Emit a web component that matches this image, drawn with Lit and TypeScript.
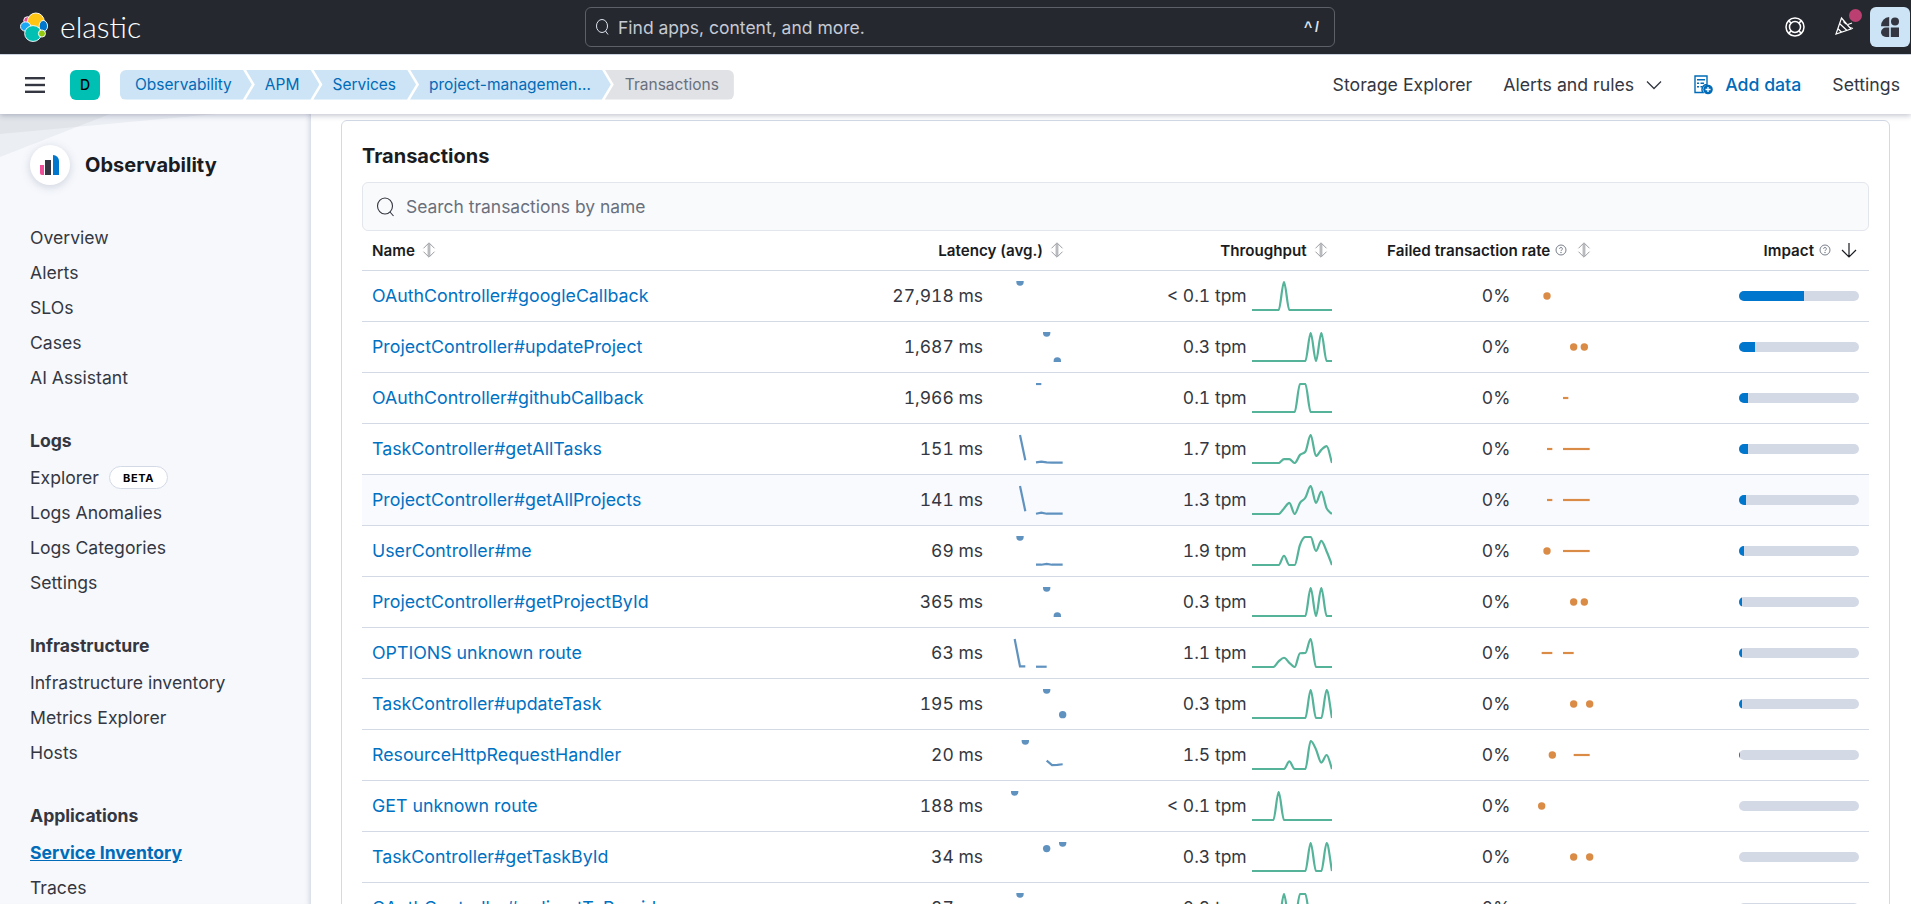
import { LitElement, css, html, svg } from 'lit'
import { customElement } from 'lit/decorators.js'

const STEP = 16 / 3
const SPARK_H = 30

type Series = Array<number | null>

interface Row {
  name: string
  latency: string
  throughput: string
  lat: Series
  tpm: number[]
  impact: number
}

// sparse series helper: idx -> value, everything else null
const sparse = (m: Record<number, number>): Series =>
  Array.from({ length: 16 }, (_, i) => (i in m ? m[i] : null))

const line = (m: Record<number, number>) => {
  const out: number[] = new Array(16).fill(0)
  Object.entries(m).forEach(([k, v]) => (out[+k] = v))
  return out
}

const ROWS: Row[] = [
  { name: 'OAuthController#googleCallback', latency: '27,918 ms', throughput: '< 0.1 tpm', lat: sparse({ 6: 1 }), tpm: line({ 6: 1 }), impact: 65 },
  { name: 'ProjectController#updateProject', latency: '1,687 ms', throughput: '0.3 tpm', lat: sparse({ 11: 1, 13: 0 }), tpm: line({ 11: 1, 13: 1 }), impact: 16 },
  { name: 'OAuthController#githubCallback', latency: '1,966 ms', throughput: '0.1 tpm', lat: sparse({ 9: 1, 10: 1 }), tpm: line({ 9: 1, 10: 1 }), impact: 9 },
  { name: 'TaskController#getAllTasks', latency: '151 ms', throughput: '1.7 tpm', lat: sparse({ 6: 1, 7: 0.1, 9: 0.02, 10: 0.05, 11: 0.02, 12: 0.01, 13: 0.01, 14: 0.01 }), tpm: line({ 6: 0.14, 7: 0.14, 9: 0.29, 10: 0.4, 11: 1, 12: 0.25, 13: 0.47, 14: 0.6 }), impact: 9 },
  { name: 'ProjectController#getAllProjects', latency: '141 ms', throughput: '1.3 tpm', lat: sparse({ 6: 1, 7: 0.1, 9: 0.01, 10: 0.05, 11: 0.01, 12: 0.01, 13: 0.01, 14: 0.01 }), tpm: line({ 6: 0.2, 7: 0.4, 9: 0.4, 10: 0.58, 11: 1, 12: 0.4, 13: 0.8, 14: 0.2 }), impact: 7 },
  { name: 'UserController#me', latency: '69 ms', throughput: '1.9 tpm', lat: sparse({ 6: 1, 9: 0.01, 10: 0.01, 11: 0.04, 12: 0.01, 13: 0.01, 14: 0.01 }), tpm: line({ 6: 0.33, 9: 0.72, 10: 1, 11: 1, 12: 0.5, 13: 0.86, 14: 0.48 }), impact: 5 },
  { name: 'ProjectController#getProjectById', latency: '365 ms', throughput: '0.3 tpm', lat: sparse({ 11: 1, 13: 0 }), tpm: line({ 11: 1, 13: 1 }), impact: 3.3 },
  { name: 'OPTIONS unknown route', latency: '63 ms', throughput: '1.1 tpm', lat: sparse({ 5: 1, 6: 0.02, 7: 0.02, 9: 0.01, 10: 0.01, 11: 0.01 }), tpm: line({ 5: 0.2, 6: 0.33, 7: 0.15, 9: 0.49, 10: 0.5, 11: 1 }), impact: 2.5 },
  { name: 'TaskController#updateTask', latency: '195 ms', throughput: '0.3 tpm', lat: sparse({ 11: 1, 14: 0.12 }), tpm: line({ 11: 1, 14: 1 }), impact: 2.5 },
  { name: 'ResourceHttpRequestHandler', latency: '20 ms', throughput: '1.5 tpm', lat: sparse({ 7: 1, 11: 0.3, 12: 0.14, 13: 0.15, 14: 0.17 }), tpm: line({ 7: 0.27, 11: 1, 12: 0.7, 13: 0.23, 14: 0.5 }), impact: 1.2 },
  { name: 'GET unknown route', latency: '188 ms', throughput: '< 0.1 tpm', lat: sparse({ 5: 1 }), tpm: line({ 5: 1 }), impact: 0 },
  { name: 'TaskController#getTaskById', latency: '34 ms', throughput: '0.3 tpm', lat: sparse({ 11: 0.8, 14: 1 }), tpm: line({ 11: 1, 14: 1 }), impact: 0 },
  { name: 'OAuthController#redirectToProvider', latency: '27 ms', throughput: '0.2 tpm', lat: sparse({ 6: 1 }), tpm: line({ 6: 1, 9: 1, 10: 1 }), impact: 0 }
]

const SIDE_GROUPS = [
  { title: '', items: ['Overview', 'Alerts', 'SLOs', 'Cases', 'AI Assistant'] },
  { title: 'Logs', items: ['Explorer', 'Logs Anomalies', 'Logs Categories', 'Settings'] },
  { title: 'Infrastructure', items: ['Infrastructure inventory', 'Metrics Explorer', 'Hosts'] },
  { title: 'Applications', items: ['Service Inventory', 'Traces'] }
]

const CRUMBS = ['Observability', 'APM', 'Services', 'project-managemen…']

const px = (i: number) => i * STEP
const py = (v: number) => 29 - v * 28

// same shape as d3 curveMonotoneX
function monotonePath(vals: number[]): string {
  const xs = vals.map((_, i) => px(i))
  const ys = vals.map(py)
  const n = vals.length
  const d: number[] = []
  for (let i = 0; i < n - 1; i++) d.push((ys[i + 1] - ys[i]) / STEP)
  const t: number[] = new Array(n).fill(0)
  for (let i = 1; i < n - 1; i++) {
    const a = d[i - 1]
    const b = d[i]
    t[i] = a * b <= 0 ? 0 : (Math.sign(a) + Math.sign(b)) * Math.min(Math.abs(a), Math.abs(b), Math.abs(a + b) / 4)
  }
  t[0] = d[0]
  t[n - 1] = d[n - 2]
  let out = `M${xs[0]},${ys[0]}`
  for (let i = 0; i < n - 1; i++) {
    const h = STEP / 3
    out += `C${xs[i] + h},${ys[i] + t[i] * h} ${xs[i + 1] - h},${ys[i + 1] - t[i + 1] * h} ${xs[i + 1]},${ys[i + 1]}`
  }
  return out
}

function sparkLine(vals: number[], color: string) {
  return html`<svg class="spark" viewBox="0 0 80 ${SPARK_H}">
    <path d=${monotonePath(vals)} fill="none" stroke=${color} stroke-width="2.2" />
  </svg>`
}

// series with holes: single points become dots, runs become line pieces
function sparkGaps(vals: Series, color: string, flat = false) {
  const parts: ReturnType<typeof svg>[] = []
  let run: number[] = []
  const flush = () => {
    if (run.length === 1) {
      const v = vals[run[0]] as number
      parts.push(svg`<circle cx=${px(run[0])} cy=${flat ? 15 : py(v)} r="3.7" fill=${color} />`)
    } else if (run.length > 1) {
      const pts = run.map((i) => `${px(i)},${flat ? 15 : py(vals[i] as number)}`).join(' ')
      parts.push(svg`<polyline points=${pts} fill="none" stroke=${color} stroke-width="2.2" />`)
    }
    run = []
  }
  vals.forEach((v, i) => {
    if (v === null) flush()
    else run.push(i)
  })
  flush()
  return html`<svg class="spark" viewBox="0 0 80 ${SPARK_H}">${parts}</svg>`
}

const sortIcon = html`<svg class="sort" viewBox="0 0 14 16" fill="none" stroke="#8e9298" stroke-width="0.9">
  <path d="M7 .8L1.5 6.3M7 .8l5.5 5.5M7 15.2L1.5 9.7M7 15.2l5.5-5.5M6.2 2v12M7.8 2v12" />
</svg>`

const helpIcon = html`<svg class="help" viewBox="0 0 12 12" fill="none" stroke="#69707d" stroke-width="0.9">
  <circle cx="6" cy="6" r="5" />
  <path d="M4.6 4.8a1.4 1.4 0 1 1 2 1.3c-.4.2-.6.5-.6 1" />
  <circle cx="6" cy="8.6" r=".3" />
</svg>`

@customElement('app-root')
export class AppRoot extends LitElement {
  static styles = css`
    :host {
      display: block;
      height: 904px;
      overflow: hidden;
      font-family: Inter, 'Liberation Sans', sans-serif;
      color: #343741;
      background: #fff;
    }
    .topbar {
      height: 54px;
      background: #25282f;
      border-bottom: 1px solid #d3dae6;
      display: grid;
      grid-template-columns: 585px 750px 1fr;
      align-items: center;
    }
    .brand {
      display: flex;
      align-items: center;
      gap: 12px;
      padding-left: 20px;
    }
    .brand span {
      font-family: Lato, sans-serif;
      font-weight: 300;
      font-size: 30px;
      color: #fff;
      line-height: 40px;
      margin-top: -3px;
    }
    .global-search {
      height: 40px;
      box-sizing: border-box;
      border: 1px solid #5d6068;
      border-radius: 6px;
      display: flex;
      align-items: center;
      padding: 0 12px 0 9px;
      gap: 7px;
      color: #c5cad3;
      font-size: 17.5px;
    }
    .global-search .grow {
      flex: 1;
    }
    .global-search kbd {
      font-family: 'Liberation Sans', sans-serif;
      font-weight: 700;
      font-size: 14px;
      color: #dfe5ef;
      letter-spacing: 3px;
    }
    .top-actions {
      display: flex;
      justify-content: flex-end;
      align-items: center;
      height: 100%;
    }
    .lifebuoy {
      margin-right: 30px;
    }
    .party {
      position: relative;
      display: flex;
      margin-right: 15px;
      margin-bottom: 4px;
    }
    .party i {
      position: absolute;
      left: 13.5px;
      top: -6.5px;
      width: 13px;
      height: 13px;
      border-radius: 50%;
      background: #bc3f72;
    }
    .help-btn {
      width: 40px;
      height: 40px;
      margin-right: 1px;
      background: #cce4f5;
      border-radius: 6px;
      display: flex;
      align-items: center;
      justify-content: center;
    }
    .subbar {
      position: relative;
      z-index: 2;
      height: 59px;
      background: #fff;
      box-shadow: 0 2px 5px rgba(60, 70, 100, 0.28);
      display: flex;
      align-items: center;
    }
    .burger {
      margin-left: 25px;
      display: flex;
    }
    .avatar {
      margin-left: 25px;
      width: 30px;
      height: 30px;
      border-radius: 6px;
      background: #00bfb3;
      color: #000;
      font-size: 14px;
      font-weight: 500;
      display: flex;
      align-items: center;
      justify-content: center;
    }
    .crumbs {
      margin-left: 20px;
      display: flex;
      height: 30px;
    }
    .crumb {
      height: 30px;
      display: flex;
      align-items: center;
      font-size: 15.5px;
      color: #006bb8;
      background: #cce4f5;
      padding: 0 20px 0 19px;
      margin-right: -6px;
      white-space: nowrap;
      clip-path: polygon(0 0, calc(100% - 9px) 0, 100% 50%, calc(100% - 9px) 100%, 0 100%, 9px 50%);
    }
    .crumb.first {
      border-radius: 6px 0 0 6px;
      padding-left: 15px;
      clip-path: polygon(0 0, calc(100% - 9px) 0, 100% 50%, calc(100% - 9px) 100%, 0 100%);
    }
    .crumb.last {
      background: #e0e2e5;
      color: #69707d;
      border-radius: 0 6px 6px 0;
      padding: 0 15px 0 20px;
      margin-right: 0;
      clip-path: polygon(0 0, 100% 0, 100% 100%, 0 100%, 9px 50%);
    }
    .sub-links {
      margin-left: auto;
      display: flex;
      align-items: center;
      font-size: 17.7px;
      color: #343741;
      padding-right: 11px;
    }
    .sub-links .link {
      display: flex;
      align-items: center;
    }
    .sub-links .alerts {
      margin-left: 31px;
      gap: 12px;
    }
    .sub-links .add {
      margin-left: 32px;
      gap: 12px;
      color: #006bb8;
      font-weight: 500;
    }
    .sub-links .settings {
      margin-left: 31px;
    }
    .body {
      display: flex;
      height: 790px;
      overflow: hidden;
    }
    .side {
      position: relative;
      width: 311px;
      flex: none;
      box-sizing: border-box;
      background: #f6f8fc;
      box-shadow: inset -6px 0 6px -6px rgba(90, 100, 130, 0.35);
      padding: 0 0 0 30px;
      color: #343741;
      font-size: 17.6px;
    }
    .side .deco {
      position: absolute;
      left: 0;
      top: 0;
    }
    .side-head {
      position: relative;
      display: flex;
      align-items: center;
      gap: 15px;
      height: 40px;
      padding-top: 31px;
      margin-bottom: 35px;
    }
    .side-logo {
      width: 40px;
      height: 40px;
      border-radius: 50%;
      background: #fff;
      box-shadow: 0 2px 8px rgba(90, 100, 130, 0.25);
      display: flex;
      align-items: center;
      justify-content: center;
    }
    .side-head strong {
      font-size: 20px;
      font-weight: 700;
      color: #1a1c21;
    }
    .group {
      margin-bottom: 31.5px;
    }
    .group h4 {
      margin: 0 0 5.5px;
      font-size: 17.6px;
      font-weight: 700;
      line-height: 28px;
      color: #343741;
    }
    .group a {
      display: flex;
      align-items: center;
      height: 35px;
      gap: 10px;
    }
    .group a.active {
      color: #006bb8;
      font-weight: 700;
      text-decoration: underline;
    }
    .beta {
      font-size: 11px;
      font-weight: 700;
      letter-spacing: 0.6px;
      color: #000;
      height: 23px;
      width: 59px;
      box-sizing: border-box;
      border: 1px solid #d3dae6;
      border-radius: 12px;
      background: #fff;
      display: flex;
      align-items: center;
      justify-content: center;
    }
    .main {
      flex: 1;
      min-width: 0;
      padding: 6px 21px 0 30px;
    }
    .panel {
      height: 900px;
      box-sizing: border-box;
      border: 1px solid #d3dae6;
      border-radius: 6px;
      padding: 22px 20px 0 20px;
    }
    .panel h3 {
      margin: 0 0 13px;
      font-size: 20px;
      line-height: 26px;
      font-weight: 700;
      color: #1a1c21;
    }
    .search {
      height: 49px;
      box-sizing: border-box;
      border: 1px solid #e3e6ec;
      border-radius: 6px;
      background: #f9fafc;
      display: flex;
      align-items: center;
      gap: 10px;
      padding-left: 13px;
      font-size: 17.45px;
      color: #69707d;
    }
    .tr {
      display: grid;
      grid-template-columns: 1fr repeat(4, 263.67px);
      padding: 0 10px;
      border-bottom: 1px solid #d3dae6;
      height: 51px;
      box-sizing: border-box;
      align-items: center;
    }
    .tr.hover {
      background: #f9fafe;
    }
    .thead {
      height: 40px;
      font-size: 15.2px;
      font-weight: 600;
      color: #1a1c21;
    }
    .th {
      display: flex;
      align-items: center;
      justify-content: flex-end;
      white-space: nowrap;
      gap: 7px;
      padding-right: 4px;
      padding-bottom: 1px;
    }
    .th.left {
      justify-content: flex-start;
      padding-right: 0;
    }
    .sort {
      width: 14px;
      height: 16px;
    }
    .help {
      width: 12px;
      height: 12px;
      margin-left: -2px;
      margin-right: 3px;
    }
    .down {
      width: 16px;
      height: 16px;
      margin-right: -2px;
    }
    .name {
      color: #0071c2;
      font-size: 17.8px;
      white-space: nowrap;
      padding-bottom: 2px;
    }
    .num {
      display: flex;
      align-items: center;
      justify-content: flex-end;
      gap: 5px;
      font-size: 17.5px;
      font-variant-numeric: tabular-nums;
      color: #343741;
      white-space: nowrap;
    }
    .val {
      padding-bottom: 2px;
    }
    .spark {
      width: 80px;
      height: 30px;
      flex: none;
      display: block;
      overflow: hidden;
    }
    .bar {
      width: 120px;
      height: 10px;
      margin-left: auto;
      background: #d3dae6;
      border-radius: 5px;
      overflow: hidden;
    }
    .bar div {
      height: 100%;
      background: #0077cc;
    }
  `

  private renderSide() {
    return html`<aside class="side">
      <svg class="deco" width="311" height="60" viewBox="0 0 311 60">
        <path d="M0 0H216L0 20Z" fill="rgba(105,112,125,.07)" />
        <path d="M0 0H110L0 43Z" fill="rgba(105,112,125,.07)" />
      </svg>
      <div class="side-head">
        <div class="side-logo">
          <svg width="20" height="20" viewBox="0 0 20 20">
            <path d="M0 10h4v10H2a2 2 0 0 1-2-2z" fill="#f04e98" />
            <rect x="5" y="5" width="6" height="15" fill="#343741" />
            <path d="M13 0a6 6 0 0 1 6 6v14h-6z" fill="#0077cc" />
          </svg>
        </div>
        <strong>Observability</strong>
      </div>
      ${SIDE_GROUPS.map(
        (g) => html`<div class="group">
          ${g.title ? html`<h4>${g.title}</h4>` : ''}
          ${g.items.map(
            (it) => html`<a class=${it === 'Service Inventory' ? 'active' : ''}>
              ${it}${it === 'Explorer' ? html`<span class="beta">BETA</span>` : ''}
            </a>`
          )}
        </div>`
      )}
    </aside>`
  }

  private renderRow(r: Row, i: number) {
    return html`<div class="tr ${i === 4 ? 'hover' : ''}">
      <div class="name">${r.name}</div>
      <div class="num"><span class="val">${r.latency}</span>${sparkGaps(r.lat, '#6092c0')}</div>
      <div class="num"><span class="val">${r.throughput}</span>${sparkLine(r.tpm, '#54b399')}</div>
      <div class="num"><span class="val">0%</span>${sparkGaps(r.lat, '#da8b45', true)}</div>
      <div class="bar"><div style="width:${r.impact}px"></div></div>
    </div>`
  }

  render() {
    return html`
      <header class="topbar">
        <div class="brand">
          <svg width="28" height="30" viewBox="0 0 30 32">
            <circle cx="8" cy="9" r="4" fill="#f04e98" stroke="#fff" />
            <ellipse cx="17" cy="10" rx="9" ry="9" fill="#fec514" stroke="#fff" />
            <ellipse cx="6" cy="15.5" rx="5.5" ry="5" fill="#1ba9f5" stroke="#fff" />
            <ellipse cx="25" cy="15" rx="4.5" ry="6" fill="#0077cc" stroke="#fff" />
            <ellipse cx="14" cy="23" rx="9" ry="8.5" fill="#00bfb3" stroke="#fff" />
            <circle cx="23.5" cy="23" r="3.8" fill="#93c90e" stroke="#fff" />
          </svg>
          <span>elastic</span>
        </div>
        <div class="global-search">
          <svg width="16" height="18" viewBox="0 0 16 18" fill="none" stroke="#dfe5ef" stroke-width="1">
            <ellipse cx="7" cy="8" rx="5.5" ry="6.5" />
            <path d="M10.5 13l2.5 3.5" />
          </svg>
          <span>Find apps, content, and more.</span>
          <span class="grow"></span>
          <kbd>^/</kbd>
        </div>
        <div class="top-actions">
          <svg class="lifebuoy" width="20" height="20" viewBox="0 0 20 20" fill="none" stroke="#fff" stroke-width="1.5">
            <circle cx="10" cy="10" r="9" />
            <circle cx="10" cy="10" r="5.5" />
            <path d="M3.6 3.6l2.5 2.5M16.4 3.6l-2.5 2.5M3.6 16.4l2.5-2.5M16.4 16.4l-2.5-2.5" />
          </svg>
          <div class="party">
            <svg width="20" height="20" viewBox="0 0 20 20" fill="none" stroke="#fff" stroke-width="1.2">
              <path d="M6.5 3L1 19l15-5zM4.5 8.5l7.5 7M2.8 13.5l4 4" />
              <path d="M8.5 6.5l2.5 2.5M13 9.5l4-1.5M15 12.5l3 1" />
            </svg>
            <i></i>
          </div>
          <div class="help-btn">
            <svg width="18" height="20" viewBox="0 0 18 20" fill="#343741">
              <path d="M8.2 0V9.2H0A8.2 9.2 0 0 1 8.2 0z" />
              <circle cx="14" cy="4.4" r="4" />
              <path d="M8.2 10.5V20H4.9a4.9 4.75 0 0 1 0-9.5z" />
              <rect x="9.8" y="10.5" width="8.2" height="9.5" />
            </svg>
          </div>
        </div>
      </header>
      <nav class="subbar">
        <div class="burger">
          <svg width="20" height="16" viewBox="0 0 20 16" fill="#343741">
            <rect width="20" height="2.4" /><rect y="6.8" width="20" height="2.4" /><rect y="13.6" width="20" height="2.4" />
          </svg>
        </div>
        <div class="avatar">D</div>
        <div class="crumbs">
          ${CRUMBS.map((c, i) => html`<div class="crumb ${i === 0 ? 'first' : ''}">${c}</div>`)}
          <div class="crumb last">Transactions</div>
        </div>
        <div class="sub-links">
          <span class="link">Storage Explorer</span>
          <span class="link alerts">
            Alerts and rules
            <svg width="16" height="10" viewBox="0 0 16 10" fill="none" stroke="#343741" stroke-width="1.3"><path d="M1 1.5l7 7 7-7" /></svg>
          </span>
          <span class="link add">
            <svg width="19" height="20" viewBox="0 0 19 20">
              <path d="M1 1h12v8.5a5 5 0 0 0-4 8H1z" fill="none" stroke="#006bb8" stroke-width="1.4" />
              <path d="M3 4h8v1.5H3zM3 7.5h2V9H3zM6.5 7.5H10V9H6.5zM3 11h2v1.5H3zM6.5 11h2v1.5h-2z" fill="#006bb8" />
              <circle cx="14" cy="14.5" r="4.8" fill="#006bb8" />
              <path d="M14 12v5M11.5 14.5h5" stroke="#fff" stroke-width="1.3" />
            </svg>
            Add data
          </span>
          <span class="link settings">Settings</span>
        </div>
      </nav>
      <div class="body">
        ${this.renderSide()}
        <main class="main">
          <section class="panel">
            <h3>Transactions</h3>
            <div class="search">
              <svg width="20" height="22" viewBox="0 0 20 22" fill="none" stroke="#343741" stroke-width="1.1">
                <ellipse cx="9" cy="10" rx="7.5" ry="8" />
                <path d="M14 16l3.5 4" />
              </svg>
              Search transactions by name
            </div>
            <div class="tr thead">
              <div class="th left">Name ${sortIcon}</div>
              <div class="th">Latency (avg.) ${sortIcon}</div>
              <div class="th">Throughput ${sortIcon}</div>
              <div class="th">Failed transaction rate ${helpIcon} ${sortIcon}</div>
              <div class="th">
                Impact ${helpIcon}
                <svg class="down" viewBox="0 0 16 16" fill="none" stroke="#1a1c21" stroke-width="1.2"><path d="M8 1v14M1 8l7 7 7-7" /></svg>
              </div>
            </div>
            ${ROWS.map((r, i) => this.renderRow(r, i))}
          </section>
        </main>
      </div>
    `
  }
}
